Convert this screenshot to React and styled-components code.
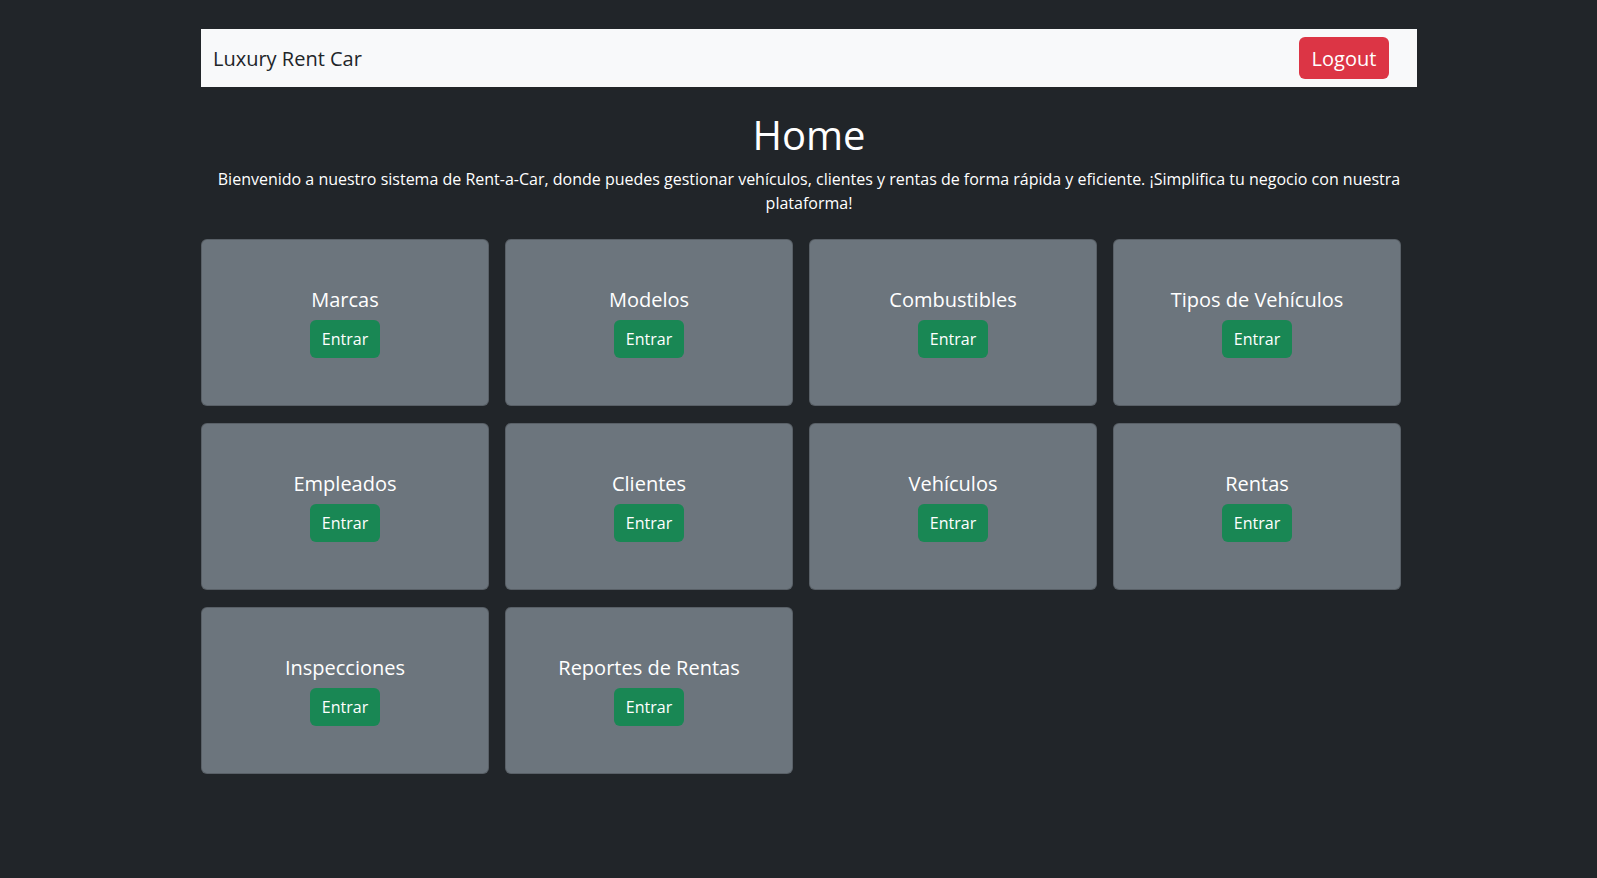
import React from 'react'
import styled, { createGlobalStyle } from 'styled-components'

const sections = [
  'Marcas',
  'Modelos',
  'Combustibles',
  'Tipos de Vehículos',
  'Empleados',
  'Clientes',
  'Vehículos',
  'Rentas',
  'Inspecciones',
  'Reportes de Rentas',
]

const GlobalStyle = createGlobalStyle`
  html, body {
    margin: 0;
    background-color: #212529;
    font-family: 'Open Sans', 'Noto Sans', sans-serif;
    color: #fff;
  }
  * {
    box-sizing: border-box;
  }
`

const App = () => {
  return (
    <Page>
      <GlobalStyle />
      <Shell>
        <Navbar>
          <Brand>Luxury Rent Car</Brand>
          <LogoutButton>Logout</LogoutButton>
        </Navbar>
        <Title>Home</Title>
        <Intro>
          Bienvenido a nuestro sistema de Rent-a-Car, donde puedes gestionar vehículos, clientes y
          rentas de forma rápida y eficiente. ¡Simplifica tu negocio con nuestra plataforma!
        </Intro>
        <CardGrid>
          {sections.map((s) => (
            <Card key={s}>
              <CardTitle>{s}</CardTitle>
              <EnterButton>Entrar</EnterButton>
            </Card>
          ))}
        </CardGrid>
      </Shell>
    </Page>
  )
}

const Page = styled.div`
  min-height: 100vh;
  padding-top: 29px;
  padding-bottom: 40px;
`

const Shell = styled.div`
  width: 1216px;
  margin-left: 201px;
`

const Navbar = styled.nav`
  display: flex;
  align-items: center;
  justify-content: space-between;
  height: 58px;
  padding: 0 28px 0 12px;
  background-color: #f8f9fa;
`

const Brand = styled.span`
  font-size: 20px;
  color: #212529;
`

const LogoutButton = styled.button`
  width: 90px;
  height: 42px;
  border: none;
  border-radius: 6px;
  background-color: #dc3545;
  color: #fff;
  font-family: inherit;
  font-size: 20px;
  cursor: pointer;
`

const Title = styled.h1`
  margin: 24px 0 8px;
  font-size: 40px;
  font-weight: 500;
  line-height: 1.2;
  text-align: center;
`

const Intro = styled.p`
  margin: 0 0 24px;
  font-size: 16px;
  line-height: 24px;
  text-align: center;
`

const CardGrid = styled.div`
  display: grid;
  grid-template-columns: repeat(4, 288px);
  column-gap: 16px;
  row-gap: 17px;
`

const Card = styled.div`
  display: flex;
  flex-direction: column;
  align-items: center;
  justify-content: center;
  height: 167px;
  border: 1px solid rgba(0, 0, 0, 0.175);
  border-radius: 6px;
  background-color: #6c757d;
`

const CardTitle = styled.h5`
  margin: 0 0 8px;
  font-size: 20px;
  font-weight: 500;
  line-height: 1.2;
`

const EnterButton = styled.button`
  height: 38px;
  padding: 0 12px;
  border: none;
  border-radius: 6px;
  background-color: #198754;
  color: #fff;
  font-family: inherit;
  font-size: 16px;
  cursor: pointer;
`

export default App
